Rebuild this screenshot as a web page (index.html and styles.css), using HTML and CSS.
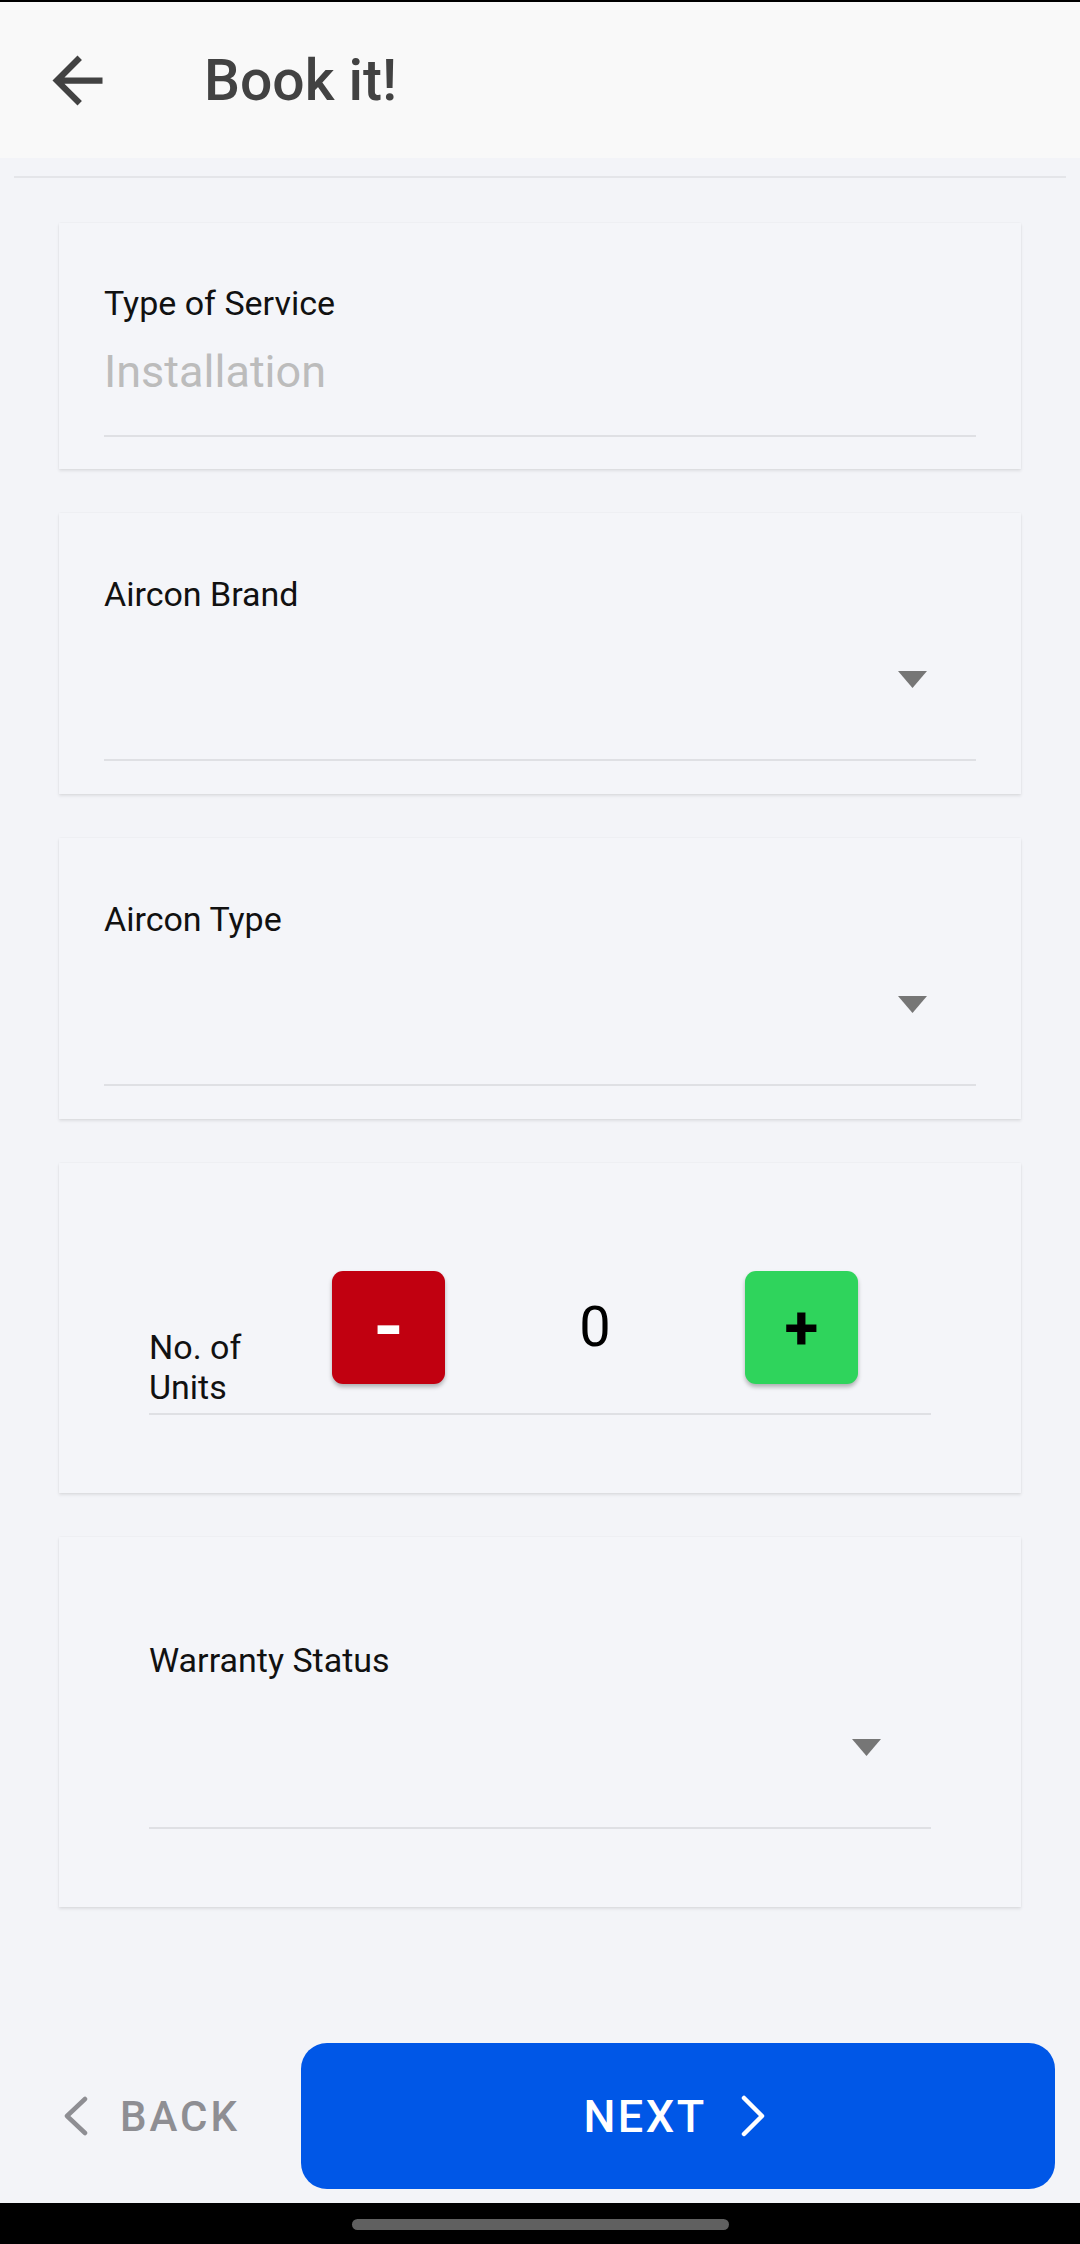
FILE: index.html
```html
<!DOCTYPE html>
<html lang="en">
<head>
<meta charset="utf-8">
<title>Book it!</title>
<link rel="stylesheet" href="styles.css">
</head>
<body>
<div class="app">
  <header class="appbar">
    <svg class="back-arrow" viewBox="0 0 24 24" width="75" height="75" aria-hidden="true">
      <path d="M20 11H7.83l5.59-5.59L12 4l-8 8 8 8 1.41-1.41L7.83 13H20v-2z" fill="#424242"/>
    </svg>
    <h1 class="title">Book it!</h1>
  </header>
  <div class="divider"></div>

  <main class="cards">
    <section class="card card-service">
      <div class="label">Type of Service</div>
      <div class="value">Installation</div>
      <div class="underline"></div>
    </section>

    <section class="card card-select">
      <div class="label">Aircon Brand</div>
      <div class="dropdown">
        <svg class="caret" viewBox="0 0 29 17" width="29" height="17" aria-hidden="true"><polygon points="0,0 29,0 14.5,17" fill="#767676"/></svg>
      </div>
      <div class="underline"></div>
    </section>

    <section class="card card-select">
      <div class="label">Aircon Type</div>
      <div class="dropdown">
        <svg class="caret" viewBox="0 0 29 17" width="29" height="17" aria-hidden="true"><polygon points="0,0 29,0 14.5,17" fill="#767676"/></svg>
      </div>
      <div class="underline"></div>
    </section>

    <section class="card card-units">
      <div class="units-row">
        <div class="label units-label">No. of<br>Units</div>
        <button class="step step-minus">-</button>
        <div class="count">0</div>
        <button class="step step-plus">+</button>
      </div>
      <div class="underline units-underline"></div>
    </section>

    <section class="card card-warranty">
      <div class="label">Warranty Status</div>
      <div class="dropdown dropdown-wide">
        <svg class="caret" viewBox="0 0 29 17" width="29" height="17" aria-hidden="true"><polygon points="0,0 29,0 14.5,17" fill="#767676"/></svg>
      </div>
      <div class="underline"></div>
    </section>
  </main>

  <footer class="footer">
    <button class="back-btn">
      <svg viewBox="0 0 26 40" width="26" height="40" aria-hidden="true"><polyline points="22,3 4,20 22,37" fill="none" stroke="#8e8e93" stroke-width="4.5" stroke-linecap="round" stroke-linejoin="round"/></svg>
      <span>BACK</span>
    </button>
    <button class="next-btn">
      <span>NEXT</span>
      <svg viewBox="0 0 28 42" width="28" height="42" aria-hidden="true"><polyline points="5,3 23,21 5,39" fill="none" stroke="#ffffff" stroke-width="4.5" stroke-linecap="round" stroke-linejoin="round"/></svg>
    </button>
  </footer>

  <div class="navbar"><div class="pill"></div></div>
</div>
</body>
</html>
```

FILE: styles.css
```css
* { box-sizing: border-box; }

html, body {
  margin: 0;
  padding: 0;
}

body {
  background: #f3f4f8;
  font-family: Roboto, "Noto Sans", "Liberation Sans", sans-serif;
  color: #111;
}

.app {
  width: 1080px;
  height: 2244px;
  display: flex;
  flex-direction: column;
}

.appbar {
  height: 158px;
  border-top: 2px solid #000;
  background: #f9f9f9;
  display: flex;
  align-items: center;
  padding-left: 40px;
}

.back-arrow {
  display: block;
  flex: none;
}

.title {
  margin: 0 0 0 89px;
  font-size: 57px;
  font-weight: 500;
  color: #424242;
  line-height: normal;
}

.divider {
  height: 2px;
  margin: 18px 14px 0 14px;
  background: #e4e5e9;
}

.cards {
  margin-top: 45px;
  padding: 0 59px;
  display: flex;
  flex-direction: column;
  gap: 44px;
}

.card {
  background: #f4f5f9;
  box-shadow: 0 2px 3px rgba(0, 0, 0, 0.09), 0 0 2px rgba(0, 0, 0, 0.05);
  padding-left: 45px;
  padding-right: 45px;
}

.label {
  font-size: 34px;
  line-height: 39px;
  color: #111;
}

.underline {
  height: 2px;
  background: #dfe0e4;
}

/* Type of service */
.card-service {
  padding-top: 61px;
  padding-bottom: 32px;
}

.value {
  margin-top: 23px;
  font-size: 45px;
  line-height: 52px;
  color: #bcbcbc;
}

.card-service .underline {
  margin-top: 37px;
}

/* dropdown cards */
.card-select {
  padding-top: 62px;
  padding-bottom: 33px;
}

.dropdown {
  height: 145px;
  display: flex;
  justify-content: flex-end;
  align-items: flex-start;
  padding-top: 57px;
  padding-right: 49px;
}

.caret { display: block; }

/* units card */
.card-units {
  padding: 108px 90px 78px 90px;
}

.units-row {
  height: 136px;
  display: grid;
  grid-template-columns: 183px 113px 300px 113px 1fr;
}

.units-label {
  align-self: end;
  line-height: 40px;
}

.step {
  align-self: start;
  width: 113px;
  height: 113px;
  border: none;
  border-radius: 11px;
  padding: 0;
  margin: 0;
  font-family: Roboto, "Noto Sans", "Liberation Sans", sans-serif;
  font-weight: 700;
  display: flex;
  align-items: center;
  justify-content: center;
  box-shadow: 0 3px 4px rgba(0, 0, 0, 0.28);
}

.step-minus {
  background: #c10010;
  color: #ffffff;
  font-size: 78px;
  line-height: 1;
}

.step-plus {
  background: #2fd45c;
  color: #000000;
  font-size: 62px;
  line-height: 1;
}

.count {
  align-self: start;
  height: 113px;
  line-height: 113px;
  text-align: center;
  font-size: 56px;
  color: #000;
}

.units-underline {
  margin-top: 6px;
}

/* warranty card */
.card-warranty {
  padding: 104px 90px 78px 90px;
}

.dropdown-wide {
  height: 147px;
  padding-top: 59px;
  padding-right: 50px;
}

/* footer */
.footer {
  margin-top: auto;
  margin-bottom: 14px;
  display: flex;
  align-items: center;
  padding-right: 25px;
}

.back-btn {
  flex: none;
  width: 301px;
  height: 146px;
  border: none;
  background: transparent;
  padding: 0 0 0 63px;
  display: flex;
  align-items: center;
  gap: 31px;
  font-family: Roboto, "Noto Sans", "Liberation Sans", sans-serif;
  font-size: 42px;
  font-weight: 500;
  letter-spacing: 3px;
  color: #8e8e93;
}

.back-btn svg { display: block; }

.next-btn {
  flex: 1;
  height: 146px;
  border: none;
  border-radius: 26px;
  background: #0057e7;
  color: #ffffff;
  display: flex;
  align-items: center;
  justify-content: center;
  gap: 32px;
  padding: 0 6px 0 0;
  font-family: Roboto, "Noto Sans", "Liberation Sans", sans-serif;
  font-size: 45px;
  font-weight: 500;
  letter-spacing: 2.5px;
}

.next-btn svg { display: block; }

.navbar {
  height: 41px;
  background: #000;
  display: flex;
  justify-content: center;
  padding-top: 16px;
}

.pill {
  width: 377px;
  height: 11px;
  border-radius: 6px;
  background: #606060;
}
```
